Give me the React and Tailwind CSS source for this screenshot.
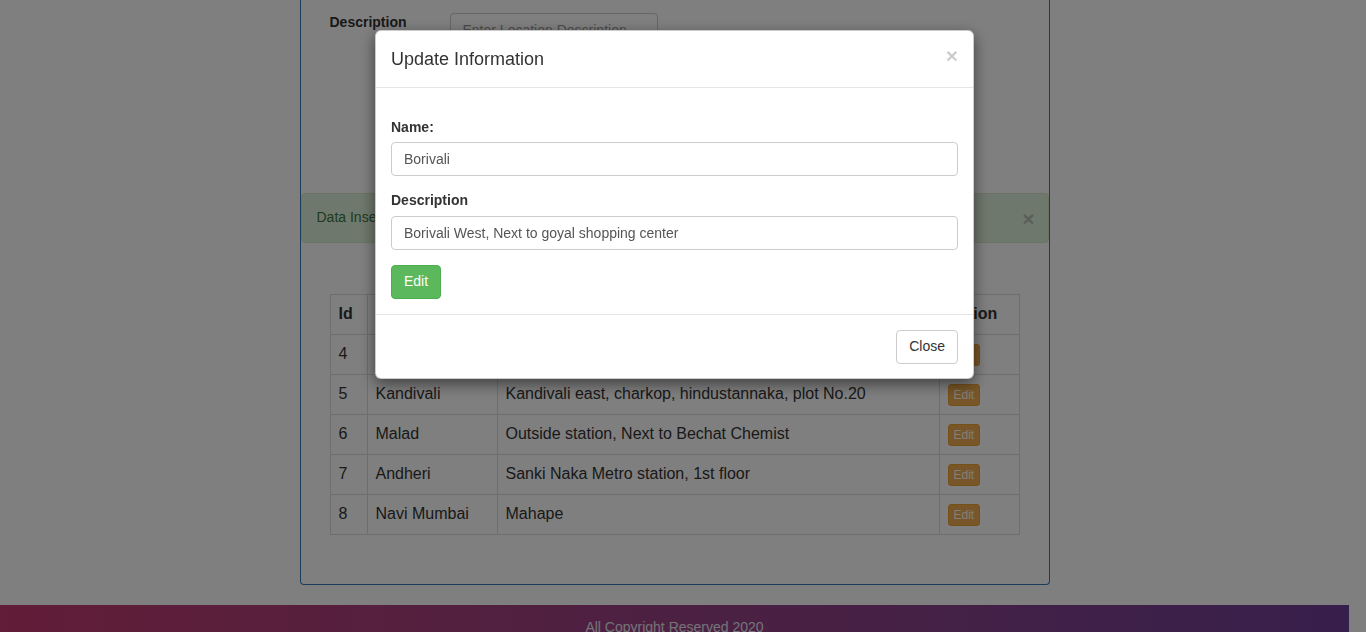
const rows = [
  { id: 4, name: "Borivali", description: "Borivali West, Next to goyal shopping center" },
  { id: 5, name: "Kandivali", description: "Kandivali east, charkop, hindustannaka, plot No.20" },
  { id: 6, name: "Malad", description: "Outside station, Next to Bechat Chemist" },
  { id: 7, name: "Andheri", description: "Sanki Naka Metro station, 1st floor" },
  { id: 8, name: "Navi Mumbai", description: "Mahape" },
]

function LocationTable() {
  return (
    <table className="w-full border-collapse text-[16px] leading-[1.42857]">
      <thead>
        <tr>
          <th className="w-[37px] border border-[#ddd] p-2 text-left align-bottom font-bold">Id</th>
          <th className="w-[130px] border border-[#ddd] p-2 text-left align-bottom font-bold">Name</th>
          <th className="border border-[#ddd] p-2 text-left align-bottom font-bold">Description</th>
          <th className="w-[80px] border border-[#ddd] p-2 text-left align-bottom font-bold">Action</th>
        </tr>
      </thead>
      <tbody>
        {rows.map((row) => (
          <tr key={row.id}>
            <td className="border border-[#ddd] p-2">{row.id}</td>
            <td className="border border-[#ddd] p-2">{row.name}</td>
            <td className="border border-[#ddd] p-2">{row.description}</td>
            <td className="border border-[#ddd] p-2">
              <button
                type="button"
                className="rounded-[3px] border border-[#eea236] bg-[#f0ad4e] px-[5px] py-px text-[12px] leading-[1.5] text-white"
              >
                Edit
              </button>
            </td>
          </tr>
        ))}
      </tbody>
    </table>
  )
}

export default function App() {
  return (
    <div className="relative h-[632px] overflow-hidden bg-white font-['Liberation_Sans',Arial,sans-serif] text-[14px] leading-[1.42857] text-[#333]">
      <div className="w-[1349px]">
        {/* Panel behind the modal */}
        <div className="mx-auto w-[750px] rounded-b border-x border-b border-[#337ab7]">
          <div className="flex items-start px-[29px] pt-[13px]">
            <label className="w-[120px] font-bold">Description</label>
            <input
              className="h-[34px] w-[208px] rounded border border-[#ccc] px-3 text-[14px] text-[#555] placeholder:text-[#999]"
              placeholder="Enter Location Description"
            />
          </div>

          <div className="mt-[146px] flex h-[50px] items-center justify-between rounded border border-[#d6e9c6] bg-[#dff0d8] pl-[15px] pr-[15px] text-[#3c763d]">
            <span>Data Inserted Successfully</span>
            <span className="-mr-[2px] text-[21px] leading-none font-bold text-black opacity-20">×</span>
          </div>

          <div className="px-[29px] pt-[51px] pb-[49px]">
            <LocationTable />
          </div>
        </div>

        <footer className="mt-[20px] h-[60px] bg-linear-to-r from-[#c43a70] to-[#6f3f97] pt-[13px] text-center text-[14px] text-[#e8e6ee]">
          All Copyright Reserved 2020
        </footer>
      </div>

      {/* Backdrop */}
      <div className="fixed inset-0 bg-black/50" />

      {/* Modal */}
      <div className="fixed top-0 left-0 w-[1349px]">
        <div className="mt-[30px] ml-[375px] w-[599px] rounded-md border border-black/20 bg-white shadow-[0_5px_15px_rgba(0,0,0,0.5)]">
          <div className="flex items-start justify-between border-b border-[#e5e5e5] px-[15px] pt-[16px] pb-[14px]">
            <h4 className="text-[18px] leading-[1.42857]">Update Information</h4>
            <span className="-mt-[2px] text-[21px] leading-none font-bold text-black opacity-20">×</span>
          </div>

          <div className="px-[15px] pt-[30px] pb-[15px]">
            <div className="mb-[15px]">
              <label className="mb-[4px] block font-bold">Name:</label>
              <input
                className="h-[34px] w-full rounded border border-[#ccc] px-3 text-[14px] text-[#555]"
                defaultValue="Borivali"
              />
            </div>
            <div className="mb-[15px]">
              <label className="mb-[5px] block font-bold">Description</label>
              <input
                className="h-[34px] w-full rounded border border-[#ccc] px-3 text-[14px] text-[#555]"
                defaultValue="Borivali West, Next to goyal shopping center"
              />
            </div>
            <button
              type="button"
              className="rounded border border-[#4cae4c] bg-[#5cb85c] px-3 py-[6px] text-[14px] leading-[1.42857] text-white"
            >
              Edit
            </button>
          </div>

          <div className="flex justify-end border-t border-[#e5e5e5] px-[15px] pt-[15px] pb-[14px]">
            <button
              type="button"
              className="rounded border border-[#ccc] bg-white px-3 py-[6px] text-[14px] leading-[1.42857] text-[#333]"
            >
              Close
            </button>
          </div>
        </div>
      </div>
    </div>
  )
}
